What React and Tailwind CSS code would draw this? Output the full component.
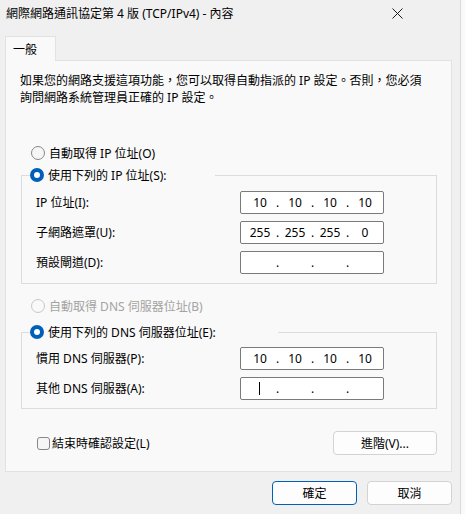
import React from 'react';

function Radio({ checked, disabled, label }) {
  let dot = "w-[14px] h-[14px] rounded-full border border-[#878787] bg-[#f6f6f6]";
  if (checked) dot = "w-[14px] h-[14px] rounded-full bg-[#005fb8] flex items-center justify-center";
  if (disabled) dot = "w-[14px] h-[14px] rounded-full border border-[#c8c8c8] bg-[#f9f9f9]";
  return (
    <div className="flex items-center h-[18px]">
      <span className={dot}>
        {checked && <span className="w-[6px] h-[6px] rounded-full bg-white" />}
      </span>
      <span className={disabled ? "ml-[4px] text-[#a3a3a3]" : "ml-[4px] text-black"}>{label}</span>
    </div>
  );
}

function IpBox({ parts, caret }) {
  return (
    <div className="w-[144px] h-[23px] border border-[#7a7a7a] rounded-[2px] bg-white flex items-center pl-[5px]">
      {parts.map((p, i) => (
        <React.Fragment key={i}>
          {i > 0 && <span className="w-[7px] text-center">.</span>}
          <span className="w-[28px] text-center flex justify-center items-center">
            {caret && i === 0 ? <span className="inline-block w-px h-[13px] bg-black -translate-x-px" /> : p}
          </span>
        </React.Fragment>
      ))}
    </div>
  );
}

function Row({ label, parts, caret }) {
  return (
    <div className="flex items-center">
      <span className="w-[204px]">{label}</span>
      <IpBox parts={parts} caret={caret} />
    </div>
  );
}

function Group({ legendWidth, radio, children }) {
  return (
    <fieldset className="ml-[15px] w-[416px] border border-[#dcdcdc] px-0 pb-0">
      <legend className={"ml-[8px] " + legendWidth}>{radio}</legend>
      {children}
    </fieldset>
  );
}

export default function App() {
  return (
    <div className="w-[465px] h-[514px] flex bg-[#f9f9f9] text-[12px] leading-[17px] text-black font-['Noto_Sans','Noto_Sans_CJK_TC',sans-serif] overflow-hidden">
      <div className="w-[461px] h-full bg-[#f0f0f0] border-r border-[#dadada] flex flex-col">
        {/* title bar */}
        <div className="h-[26px] flex items-center justify-between pl-[6px] pr-[57px]">
          <span>網際網路通訊協定第 4 版 (TCP/IPv4) - 內容</span>
          <svg width="11" height="11" viewBox="0 0 11 11" className="text-[#1b1b1b]">
            <path d="M0.5 0.5 L10.5 10.5 M10.5 0.5 L0.5 10.5" stroke="currentColor" strokeWidth="1" />
          </svg>
        </div>

        {/* tab */}
        <div className="mt-[10px] ml-[5px] w-[51px] h-[25px] -mb-px relative z-10 bg-[#f9f9f9] border border-b-0 border-[#e2e2e2] pl-[7px] flex items-center">
          一般
        </div>

        {/* panel */}
        <div className="ml-[5px] w-[447px] h-[412px] bg-[#f9f9f9] border border-[#e2e2e2] flex flex-col">
          <p className="mt-[11px] pl-[14px]">
            如果您的網路支援這項功能，您可以取得自動指派的 IP 設定。否則，您必須<br />
            詢問網路系統管理員正確的 IP 設定。
          </p>

          <div className="mt-[38px] pl-[25px]">
            <Radio label="自動取得 IP 位址(O)" />
          </div>

          <div className="mt-[4px]">
            <Group legendWidth="w-[185px]" radio={<Radio checked label="使用下列的 IP 位址(S):" />}>
              <div className="pt-[7px] pb-[9px] pl-[14px] flex flex-col gap-[7px]">
                <Row label="IP 位址(I):" parts={['10', '10', '10', '10']} />
                <Row label="子網路遮罩(U):" parts={['255', '255', '255', '0']} />
                <Row label="預設閘道(D):" parts={['', '', '', '']} />
              </div>
            </Group>
          </div>

          <div className="mt-[13px] pl-[25px]">
            <Radio disabled label="自動取得 DNS 伺服器位址(B)" />
          </div>

          <div className="mt-[8px]">
            <Group legendWidth="w-[248px]" radio={<Radio checked label="使用下列的 DNS 伺服器位址(E):" />}>
              <div className="pt-[6px] pb-[8px] pl-[14px] flex flex-col gap-[7px]">
                <Row label="慣用 DNS 伺服器(P):" parts={['10', '10', '10', '10']} />
                <Row label="其他 DNS 伺服器(A):" parts={['', '', '', '']} caret />
              </div>
            </Group>
          </div>

          <div className="mt-[22px] pl-[31px] pr-[14px] flex items-center justify-between">
            <label className="flex items-center">
              <span className="w-[13px] h-[13px] rounded-[3px] border border-[#878787] bg-[#f6f6f6]" />
              <span className="ml-[2px]">結束時確認設定(L)</span>
            </label>
            <button className="w-[104px] h-[24px] rounded-[4px] border border-[#d3d3d3] bg-[#fdfdfd] flex items-center justify-center">
              進階(V)...
            </button>
          </div>
        </div>

        {/* footer buttons */}
        <div className="mt-[9px] pr-[8px] flex justify-end gap-[10px]">
          <button className="w-[85px] h-[24px] rounded-[4px] border border-[#005fb8] bg-[#fdfdfd] flex items-center justify-center">
            確定
          </button>
          <button className="w-[85px] h-[24px] rounded-[4px] border border-[#d3d3d3] bg-[#fdfdfd] flex items-center justify-center">
            取消
          </button>
        </div>
      </div>
    </div>
  );
}
